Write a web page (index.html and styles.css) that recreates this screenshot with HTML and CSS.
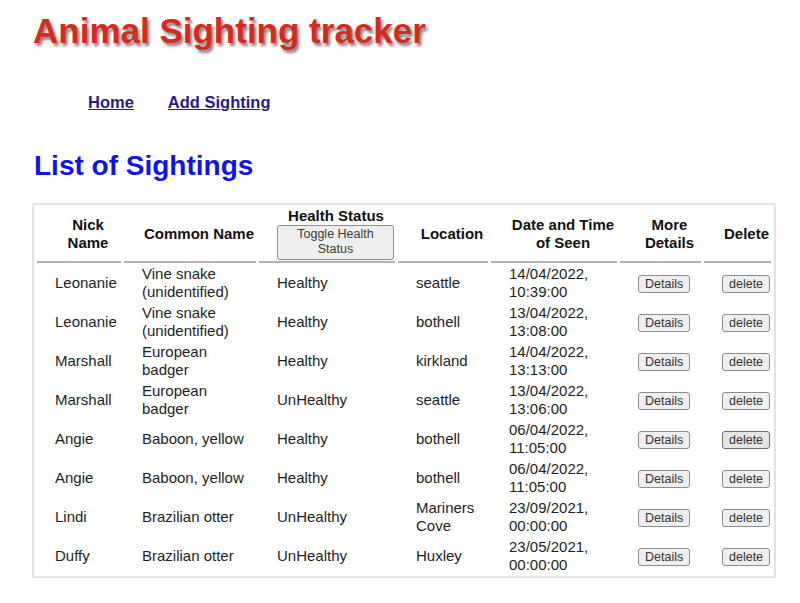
FILE: index.html
```html
<!DOCTYPE html>
<html lang="en">
<head>
<meta charset="utf-8">
<title>Animal Sighting tracker</title>
<link rel="stylesheet" href="styles.css">
</head>
<body>
<header class="masthead">
  <h1 class="title">Animal Sighting tracker</h1>
  <nav class="nav">
    <a class="nav-link" href="#">Home</a>
    <a class="nav-link" href="#">Add Sighting</a>
  </nav>
</header>
<main class="content">
  <h2 class="section-title">List of Sightings</h2>
  <table class="sightings">
    <colgroup>
      <col class="c-nick"><col class="c-common"><col class="c-health"><col class="c-loc"><col class="c-date"><col class="c-more"><col class="c-del">
    </colgroup>
    <thead>
      <tr>
        <th>Nick Name</th>
        <th>Common Name</th>
        <th>Health Status<button class="btn btn-toggle" type="button">Toggle Health<br>Status</button></th>
        <th>Location</th>
        <th>Date and Time of Seen</th>
        <th>More Details</th>
        <th>Delete</th>
      </tr>
    </thead>
    <tbody>
      <tr><td>Leonanie</td><td>Vine snake (unidentified)</td><td>Healthy</td><td>seattle</td><td>14/04/2022, 10:39:00</td><td><button class="btn" type="button">Details</button></td><td><button class="btn" type="button">delete</button></td></tr>
      <tr><td>Leonanie</td><td>Vine snake (unidentified)</td><td>Healthy</td><td>bothell</td><td>13/04/2022, 13:08:00</td><td><button class="btn" type="button">Details</button></td><td><button class="btn" type="button">delete</button></td></tr>
      <tr><td>Marshall</td><td>European badger</td><td>Healthy</td><td>kirkland</td><td>14/04/2022, 13:13:00</td><td><button class="btn" type="button">Details</button></td><td><button class="btn" type="button">delete</button></td></tr>
      <tr><td>Marshall</td><td>European badger</td><td>UnHealthy</td><td>seattle</td><td>13/04/2022, 13:06:00</td><td><button class="btn" type="button">Details</button></td><td><button class="btn" type="button">delete</button></td></tr>
      <tr><td>Angie</td><td>Baboon, yellow</td><td>Healthy</td><td>bothell</td><td>06/04/2022, 11:05:00</td><td><button class="btn" type="button">Details</button></td><td><button class="btn btn-hover" type="button">delete</button></td></tr>
      <tr><td>Angie</td><td>Baboon, yellow</td><td>Healthy</td><td>bothell</td><td>06/04/2022, 11:05:00</td><td><button class="btn" type="button">Details</button></td><td><button class="btn" type="button">delete</button></td></tr>
      <tr><td>Lindi</td><td>Brazilian otter</td><td>UnHealthy</td><td>Mariners Cove</td><td>23/09/2021, 00:00:00</td><td><button class="btn" type="button">Details</button></td><td><button class="btn" type="button">delete</button></td></tr>
      <tr><td>Duffy</td><td>Brazilian otter</td><td>UnHealthy</td><td>Huxley</td><td>23/05/2021, 00:00:00</td><td><button class="btn" type="button">Details</button></td><td><button class="btn" type="button">delete</button></td></tr>
    </tbody>
  </table>
</main>
</body>
</html>
```
FILE: styles.css
```css
* { box-sizing: border-box; }

body {
  margin: 0;
  font-family: "Liberation Sans", Arial, sans-serif;
  color: #1c1c1c;
  background: #ffffff;
}

.masthead {
  display: flex;
  flex-direction: column;
}

.title {
  margin: 11px 0 0 33px;
  font-size: 35px;
  line-height: 40px;
  font-weight: 700;
  color: #d62a1f;
  text-shadow: 2px 3px 3px rgba(40, 20, 20, 0.55);
}

.nav {
  display: flex;
  gap: 34px;
  margin: 41px 0 0 88px;
}

.nav-link {
  font-size: 16.5px;
  line-height: 20px;
  font-weight: 700;
  color: #2a1b88;
  text-decoration: underline;
}

.content {
  display: flex;
  flex-direction: column;
  align-items: flex-start;
}

.section-title {
  margin: 38px 0 0 34px;
  font-size: 28px;
  line-height: 32px;
  font-weight: 700;
  color: #1212ee;
}

.sightings {
  margin: 21px 0 0 32px;
  table-layout: fixed;
  border: 2px solid #e4e4e4;
  border-spacing: 3px 1px;
  font-size: 15px;
  line-height: 18px;
}

.c-nick { width: 84px; }
.c-common { width: 132px; }
.c-health { width: 136px; }
.c-loc { width: 90px; }
.c-date { width: 126px; }
.c-more { width: 81px; }
.c-del { width: 67px; }

.sightings th {
  padding: 1px 0 1px 18px;
  font-weight: 700;
  color: #111;
  text-align: center;
  vertical-align: middle;
  border-bottom: 2px solid #b3b3b3;
}

.sightings td {
  padding: 1px 0 1px 18px;
  text-align: left;
  vertical-align: middle;
  color: #1e1e1e;
}

.btn {
  font-family: "Liberation Sans", Arial, sans-serif;
  font-size: 12.5px;
  line-height: 16px;
  padding: 0 6px;
  color: #333;
  background: #efefef;
  border: 1px solid #8d8d8d;
  border-radius: 3px;
}

.btn-hover {
  background: #e5e5e5;
  border-color: #6f6f6f;
}

.btn-toggle {
  display: block;
  width: 117px;
  height: 35px;
  padding: 1px 4px 2px;
  line-height: 15px;
  color: #3a3a3a;
}
```
